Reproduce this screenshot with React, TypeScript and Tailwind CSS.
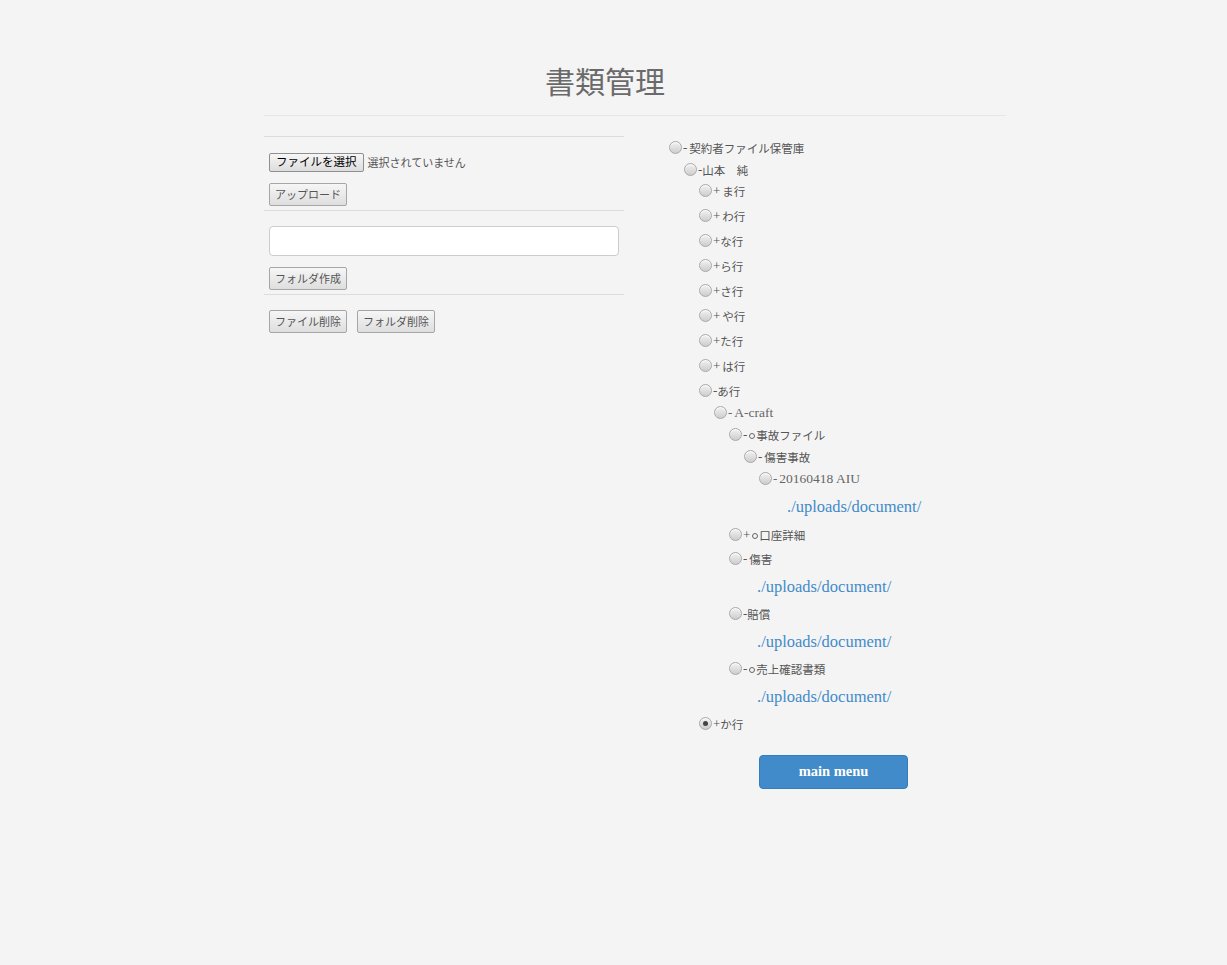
import React from "react";

type Row =
  | { kind: "node"; level: number; sign: "+" | "-"; label: string; h: number; sp?: boolean; ring?: boolean; checked?: boolean; latin?: boolean }
  | { kind: "link"; level: number; h: number };

const rows: Row[] = [
  { kind: "node", level: 0, sign: "-", label: "契約者ファイル保管庫", h: 22, sp: true },
  { kind: "node", level: 1, sign: "-", label: "山本　純", h: 21 },
  { kind: "node", level: 2, sign: "+", label: "ま行", h: 25, sp: true },
  { kind: "node", level: 2, sign: "+", label: "わ行", h: 25, sp: true },
  { kind: "node", level: 2, sign: "+", label: "な行", h: 25 },
  { kind: "node", level: 2, sign: "+", label: "ら行", h: 25 },
  { kind: "node", level: 2, sign: "+", label: "さ行", h: 25 },
  { kind: "node", level: 2, sign: "+", label: "や行", h: 25, sp: true },
  { kind: "node", level: 2, sign: "+", label: "た行", h: 25 },
  { kind: "node", level: 2, sign: "+", label: "は行", h: 25, sp: true },
  { kind: "node", level: 2, sign: "-", label: "あ行", h: 22 },
  { kind: "node", level: 3, sign: "-", label: "A-craft", h: 22, latin: true, sp: true },
  { kind: "node", level: 4, sign: "-", label: "事故ファイル", h: 22, sp: true, ring: true },
  { kind: "node", level: 5, sign: "-", label: "傷害事故", h: 22, sp: true },
  { kind: "node", level: 6, sign: "-", label: "20160418 AIU", h: 29, latin: true, sp: true },
  { kind: "link", level: 6, h: 27 },
  { kind: "node", level: 4, sign: "+", label: "口座詳細", h: 24, sp: true, ring: true },
  { kind: "node", level: 4, sign: "-", label: "傷害", h: 29, sp: true },
  { kind: "link", level: 4, h: 26 },
  { kind: "node", level: 4, sign: "-", label: "賠償", h: 29 },
  { kind: "link", level: 4, h: 26 },
  { kind: "node", level: 4, sign: "-", label: "売上確認書類", h: 29, sp: true, ring: true },
  { kind: "link", level: 4, h: 26 },
  { kind: "node", level: 2, sign: "+", label: "か行", h: 25, checked: true },
];

function Radio({ checked }: { checked?: boolean }) {
  return (
    <span className="relative inline-flex w-[13px] h-[13px] shrink-0 items-center justify-center rounded-full border border-[#a9a9a9] bg-gradient-to-b from-[#f2f2f2] to-[#cdcdcd] shadow-[inset_0_1px_1px_rgba(255,255,255,0.8)]">
      {checked && <span className="w-[5px] h-[5px] rounded-full bg-[#444]" />}
    </span>
  );
}

function Btn({ children }: { children: React.ReactNode }) {
  return (
    <button className="h-[23px] px-[5px] rounded-[2px] border border-[#a6a6a6] bg-gradient-to-b from-[#f6f6f6] to-[#dedede] text-[11px] leading-none text-[#555] font-['Noto_Sans_CJK_JP',sans-serif]">
      {children}
    </button>
  );
}

export default function App() {
  return (
    <div className="min-h-[965px] w-full bg-[#f4f4f4] text-[#555] font-['Liberation_Serif','Noto_Sans_CJK_JP',serif]">
      <div className="ml-[264px] w-[742px] pt-[58px]">
        <h1 className="pl-[281px] h-[44px] text-[30px] leading-[44px] font-normal text-[#6a6a6a] font-['Noto_Sans_CJK_JP',sans-serif]">
          書類管理
        </h1>
        <div className="mt-[13px] border-t border-[#e6e6e6]" />
        <div className="flex">
          {/* left column */}
          <div className="w-[360px] pt-[20px]">
            <div className="border-t border-[#dcdcdc]" />
            <div className="pl-[5px] pt-[15px] pb-[4px]">
              <div className="flex items-center h-[20px] gap-[4px]">
                <button className="h-[19px] px-[6px] rounded-[2px] border border-[#8f8f8f] bg-gradient-to-b from-[#f6f6f6] to-[#dddddd] text-[11.5px] leading-none text-black font-['Noto_Sans_CJK_JP',sans-serif]">
                  ファイルを選択
                </button>
                <span className="text-[11px] text-[#555] font-['Noto_Sans_CJK_JP',sans-serif]">選択されていません</span>
              </div>
              <div className="mt-[10px]">
                <Btn>アップロード</Btn>
              </div>
            </div>
            <div className="border-t border-[#dcdcdc]" />
            <div className="pl-[5px] pt-[15px] pb-[4px]">
              <input
                type="text"
                className="block w-[350px] h-[30px] rounded-[4px] border border-[#cccccc] bg-white outline-none"
              />
              <div className="mt-[10px]">
                <Btn>フォルダ作成</Btn>
              </div>
            </div>
            <div className="border-t border-[#dcdcdc]" />
            <div className="pl-[5px] pt-[15px] flex gap-[10px]">
              <Btn>ファイル削除</Btn>
              <Btn>フォルダ削除</Btn>
            </div>
          </div>

          {/* right column: tree */}
          <div className="ml-[45px] pt-[25px]">
            {rows.map((r, i) =>
              r.kind === "node" ? (
                <div
                  key={i}
                  className="flex items-start"
                  style={{ paddingLeft: r.level * 15, height: r.h }}
                >
                  <Radio checked={r.checked} />
                  <span
                    className={`ml-[1px] -mt-[1px] leading-[16px] whitespace-pre flex items-center ${
                      r.latin ? "text-[13.5px] text-[#666]" : "text-[11.5px] text-[#555] font-['Noto_Sans_CJK_JP',sans-serif]"
                    }`}
                  >
                    <span className="font-['Liberation_Serif',serif] text-[13px]">{r.sign}</span>
                    {r.sp && <span className="inline-block w-[2px]" />}
                    {r.ring && (
                      <span className="inline-block w-[6px] h-[6px] mr-[1px] mt-[2px] rounded-full border border-[#666]" />
                    )}
                    {r.label}
                  </span>
                </div>
              ) : (
                <div key={i} style={{ paddingLeft: r.level * 15 + 28, height: r.h }} className="flex items-start">
                  <a className="text-[16.5px] leading-[20px] -mt-[4px] text-[#428bca] cursor-pointer">./uploads/document/</a>
                </div>
              )
            )}
            <div className="pl-[90px] pt-[13px]">
              <button className="w-[149px] h-[34px] rounded-[4px] border border-[#357ebd] bg-[#428bca] text-white text-[14.5px] font-bold">
                main menu
              </button>
            </div>
          </div>
        </div>
      </div>
    </div>
  );
}
